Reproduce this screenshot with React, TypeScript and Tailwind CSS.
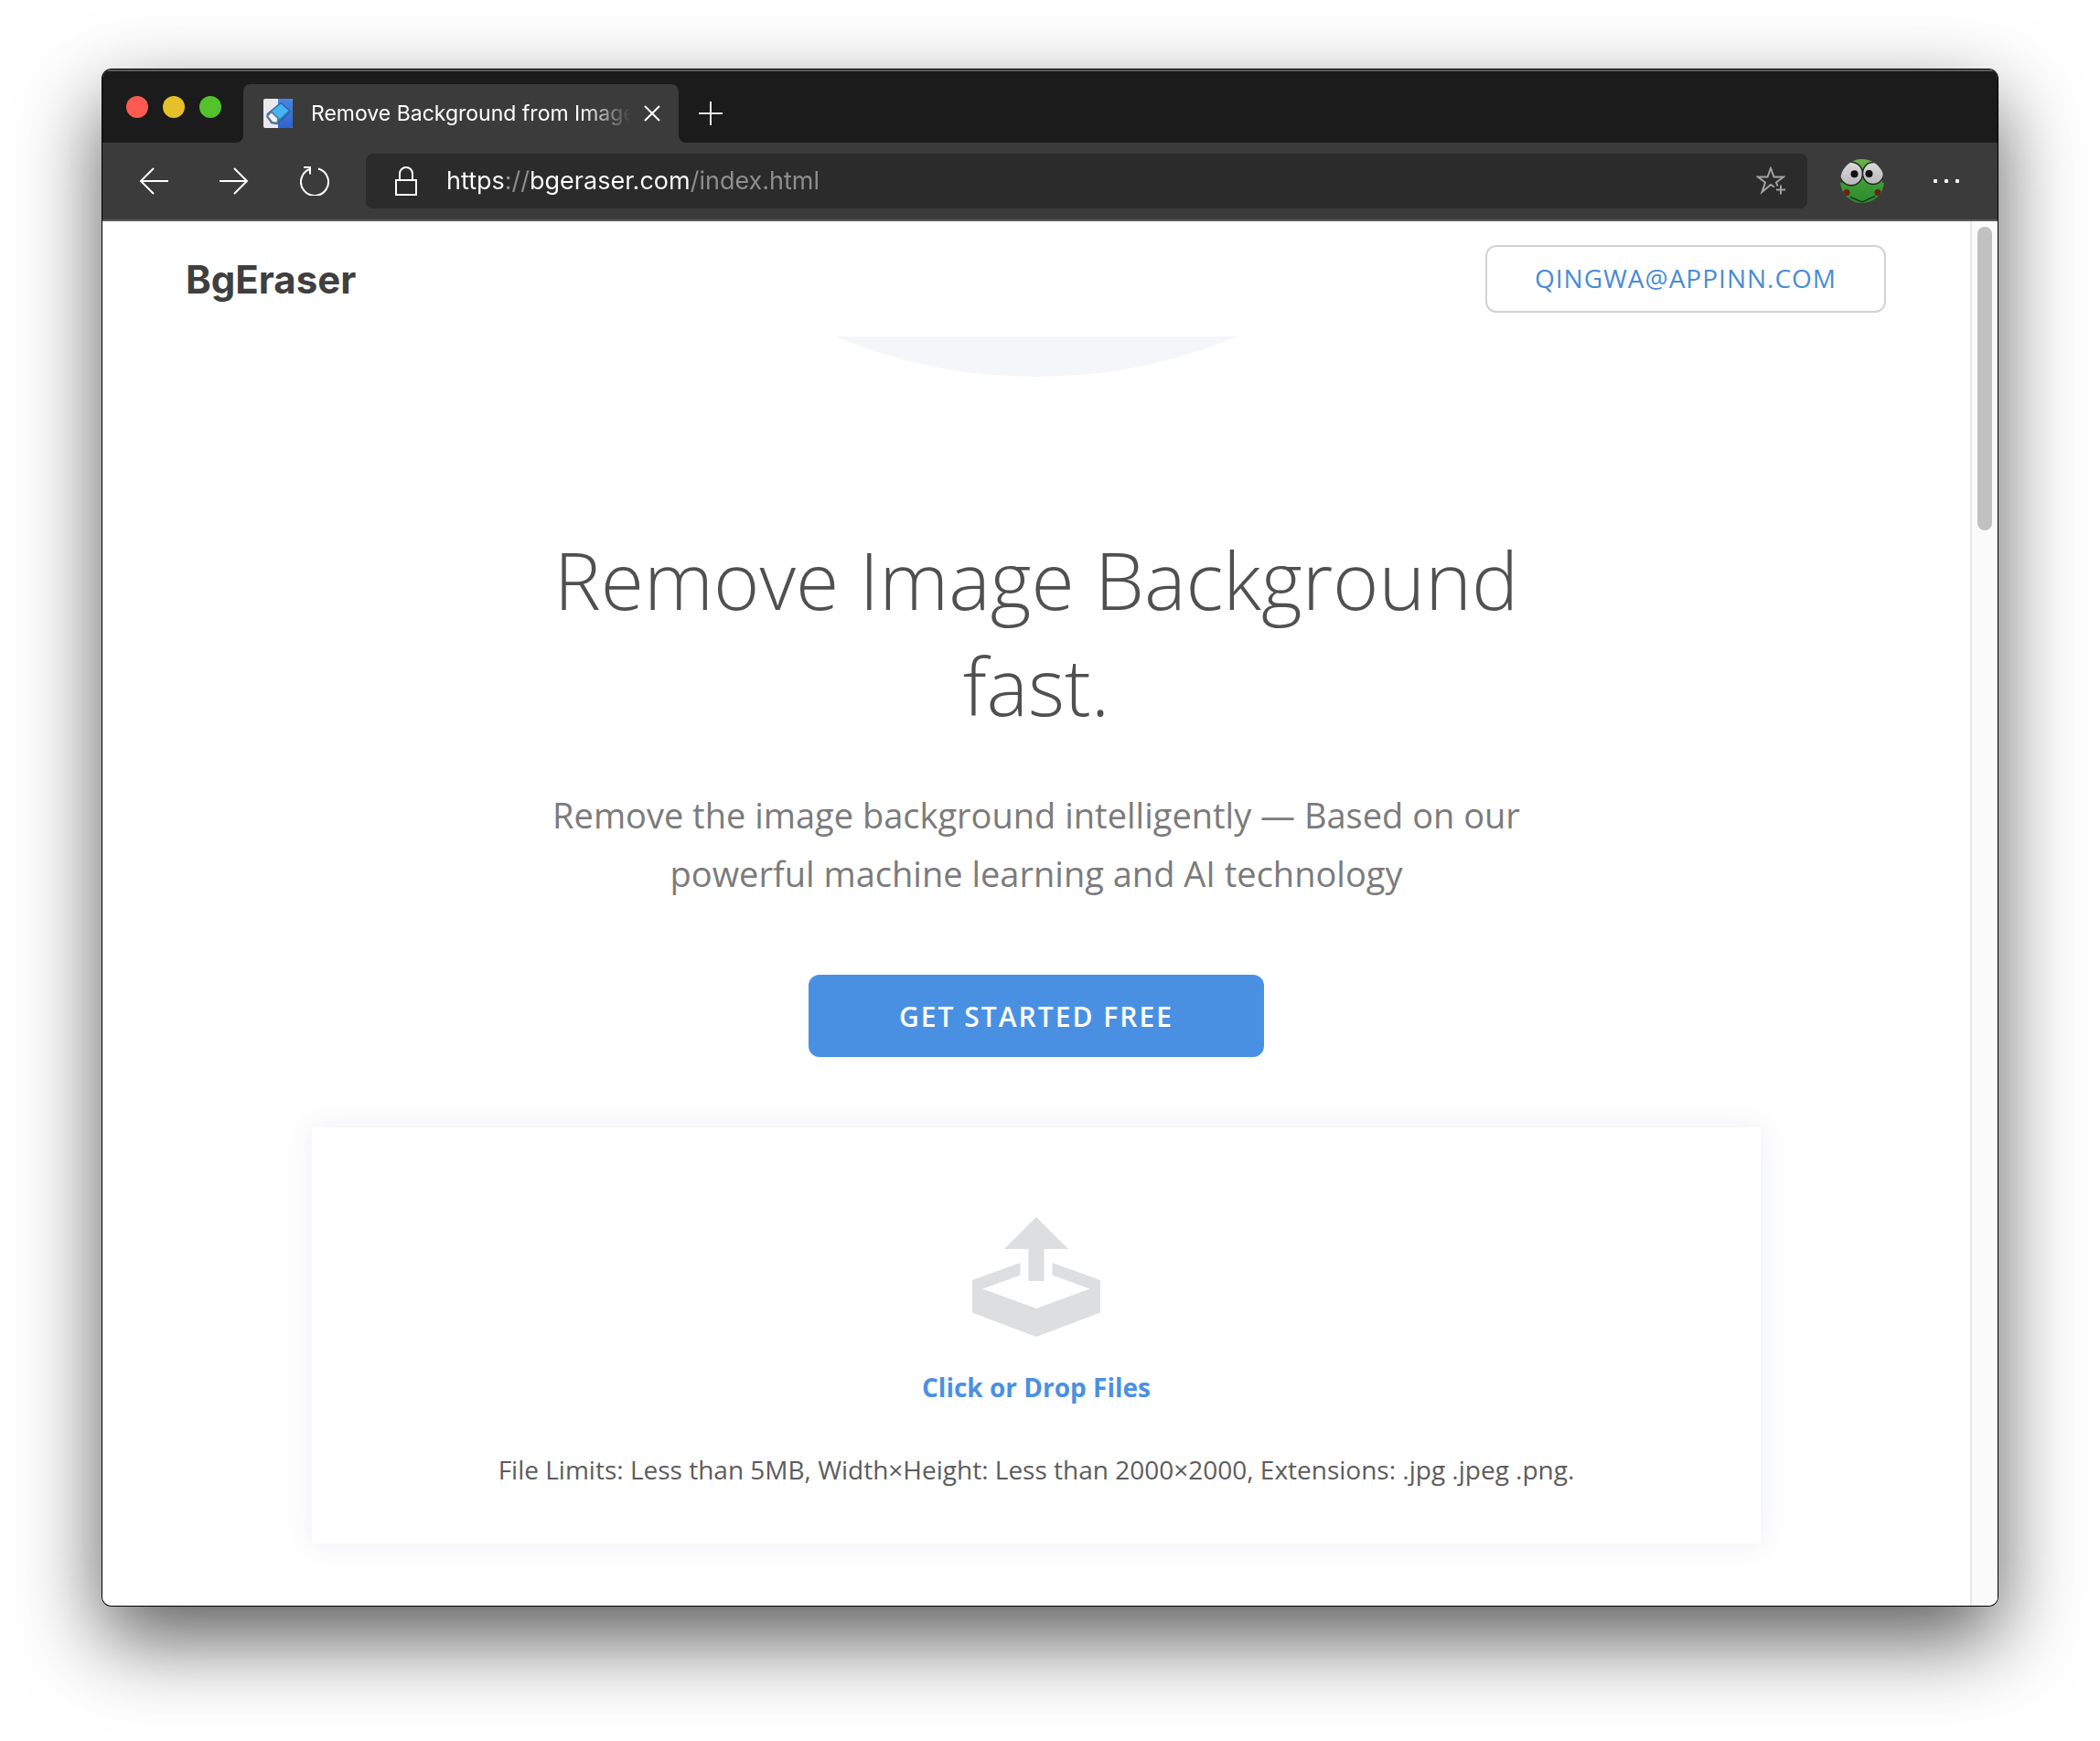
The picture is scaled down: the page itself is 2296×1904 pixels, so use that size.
import React, { useState } from 'react';

function BrowserTabs() {
  return (
    <div className="flex h-20 border-t-2 border-[#5c5c5c] bg-[#3b3b3b]">
      <div className="flex w-[154px] shrink-0 gap-4 rounded-br-lg bg-[#1b1b1b] pt-[27px] pl-[26px]">
        <button aria-label="Close window" className="size-6 rounded-full bg-[#ff5a52]" />
        <button aria-label="Minimize window" className="size-6 rounded-full bg-[#e6c029]" />
        <button aria-label="Zoom window" className="size-6 rounded-full bg-[#53c22b]" />
      </div>
      <div className="flex items-end bg-[#1b1b1b]">
        <div className="flex h-16 w-[476px] items-center rounded-t-lg bg-[#3b3b3b] pl-[22px]">
          <svg className="size-8 shrink-0" viewBox="0 0 32 32">
            <defs>
              <linearGradient id="favicon" x1="0" y1="0" x2="0" y2="1">
                <stop offset="0" stopColor="#4a86e0" />
                <stop offset="1" stopColor="#2f62cf" />
              </linearGradient>
            </defs>
            <rect width="32" height="32" rx="2" fill="#e9e9ee" />
            <path d="M16 0h14a2 2 0 0 1 2 2v28a2 2 0 0 1-2 2H16z" fill="url(#favicon)" />
            <g strokeLinejoin="round">
              <path d="M19 4.500 29 13.500 27.500 16.500 15 27.500 9 26.500 4 19.500 4.500 16.500z" fill="#2f70bd" stroke="#2c64a6" strokeWidth="1.500" />
              <path d="M19 5.500 27.500 13 18 22 9 13.500z" fill="#45b4f2" />
              <path d="M8.500 14.500 16 21.500 15 26.500 9.500 25.500 4.500 19z" fill="#f2f5f8" stroke="#6c7f92" strokeWidth="1.500" />
            </g>
          </svg>
          <span className="ml-5 w-[350px] overflow-hidden whitespace-nowrap text-[23px] text-white mask-r-from-85% mask-r-to-100%">
            Remove Background from Image
          </span>
          <button aria-label="Close tab" className="ml-3.5">
            <svg className="size-[18px]" viewBox="0 0 18 18" fill="none" stroke="#fff" strokeWidth="2">
              <path d="M1 1l16 16M17 1L1 17" />
            </svg>
          </button>
        </div>
      </div>
      <div className="flex flex-1 items-end rounded-bl-lg bg-[#1b1b1b]">
        <button aria-label="New tab" className="flex h-16 items-center px-[22px]">
          <svg className="size-[26px]" viewBox="0 0 26 26" fill="none" stroke="#e8e8e8" strokeWidth="2">
            <path d="M13 0v26M0 13h26" />
          </svg>
        </button>
      </div>
    </div>
  );
}

function FrogAvatar() {
  return (
    <svg className="size-12" viewBox="0 0 48 48">
      <defs>
        <clipPath id="avatar-clip">
          <circle cx="24" cy="24" r="24" />
        </clipPath>
        <linearGradient id="frog" x1="0" y1="0" x2="0" y2="1">
          <stop offset="0" stopColor="#6cb04e" />
          <stop offset="0.600" stopColor="#3a9a34" />
          <stop offset="1" stopColor="#2c8a2c" />
        </linearGradient>
        <linearGradient id="eye" x1="0" y1="0" x2="0" y2="1">
          <stop offset="0" stopColor="#dcdadc" />
          <stop offset="1" stopColor="#b9b6bb" />
        </linearGradient>
      </defs>
      <g clipPath="url(#avatar-clip)">
        <rect width="48" height="48" fill="url(#frog)" />
        <path d="M0 0h14L2 12v14h-2zM48 0H34l12 12v14h2z" fill="#3b3b3b" />
        <ellipse cx="12" cy="16" rx="12.500" ry="12.800" fill="url(#eye)" stroke="#1d2a1c" strokeWidth="1.500" />
        <ellipse cx="36" cy="15.500" rx="11.500" ry="12" fill="url(#eye)" stroke="#1d2a1c" strokeWidth="1.500" />
        <circle cx="15.500" cy="16.300" r="4" fill="#111" />
        <circle cx="31.500" cy="16" r="4" fill="#111" />
        <circle cx="7" cy="36.500" r="3.500" fill="#6e1f14" />
        <circle cx="41" cy="36.500" r="3.500" fill="#6e1f14" />
        <path d="M11 41.500 24 47l14-6.500" fill="none" stroke="#173a17" strokeWidth="1.500" />
      </g>
    </svg>
  );
}

function Toolbar() {
  const [url, setUrl] = useState('https://bgeraser.com/index.html');

  return (
    <div className="flex h-[86px] items-center border-b-2 border-[#5c5c5c] bg-[#3b3b3b] pr-[42px] pl-10">
      <nav className="flex items-center gap-14">
        <button aria-label="Back">
          <svg className="size-8" viewBox="0 0 32 32" fill="none" stroke="#fff" strokeWidth="2">
            <path d="M32 16H2M16 2 2 16l14 14" />
          </svg>
        </button>
        <button aria-label="Forward">
          <svg className="size-8" viewBox="0 0 32 32" fill="none" stroke="#fff" strokeWidth="2">
            <path d="M0 16h30M16 2l14 14-14 14" />
          </svg>
        </button>
        <button aria-label="Reload">
          <svg className="size-8" viewBox="0 0 32 32" fill="none" stroke="#fff" strokeWidth="2">
            <path d="M20 2.500a15 15 0 1 1-9.500.500M4 1h7v7.500" />
          </svg>
        </button>
      </nav>
      <div className="ml-10 flex h-[60px] flex-1 items-center rounded-lg bg-[#2b2b2b] pr-6 pl-8">
        <svg className="h-8 w-6 shrink-0" viewBox="0 0 24 32" fill="none" stroke="#fff" strokeWidth="2">
          <path d="M1 15h22v16H1zM5 15V8a7 7 0 0 1 14 0v7" />
        </svg>
        {/* scheme and domain are white, separators and path are dimmed */}
        <input
          type="text"
          aria-label="Address"
          value={url}
          onChange={(e) => setUrl(e.target.value)}
          className="ml-8 min-w-0 flex-1 bg-[linear-gradient(90deg,#fff_64px,#8f8f8f_64px,#8f8f8f_90px,#fff_90px,#fff_267px,#8f8f8f_267px)] bg-clip-text text-[27px] text-transparent caret-white outline-none"
        />
        <button aria-label="Add to favorites">
          <svg className="size-8" viewBox="0 0 32 32" fill="none" stroke="#a3a3a3" strokeWidth="2">
            <path d="M20 22.500 16 20 6.500 28 10 17.500 2 11.500h10.500L16 2l3.500 9.500H30l-8 6 1.500 4M27 20.500v10M22 25.500h10" />
          </svg>
        </button>
      </div>
      <button aria-label="Profile" className="ml-9">
        <FrogAvatar />
      </button>
      <button aria-label="Settings and more" className="ml-[54px] flex gap-2">
        <span className="size-1 rounded-[1px] bg-white" />
        <span className="size-1 rounded-[1px] bg-white" />
        <span className="size-1 rounded-[1px] bg-white" />
      </button>
    </div>
  );
}

function UploadIcon() {
  return (
    <svg className="h-[131px] w-[140px]" viewBox="0 0 140 131" fill="#dddee0">
      <path d="M70 0l35 35H78.500v35h-17V35H35z" />
      <path d="M0 69l52.500-19v13.500L11.500 78.500 70 100l58.500-21.500-41-15V50L140 69v35.500L70 131 0 104.500z" />
    </svg>
  );
}

export default function App() {
  return (
    <div className="flex min-h-screen flex-col bg-white px-28 pt-[76px] pb-[148px] font-['Inter',sans-serif]">
      <div className="flex flex-1 flex-col overflow-hidden rounded-[10px] shadow-[0_0_0_1px_#000,0_36px_90px_rgba(0,0,0,0.65)]">
        <BrowserTabs />
        <Toolbar />
        <div className="flex flex-1 bg-white font-['Open_Sans',sans-serif]">
          <div className="min-w-0 flex-1">
            <header className="flex h-[126px] items-center justify-between pr-[92px] pl-[91px]">
              <a href="#" className="font-['Inter',sans-serif] text-[42px] font-bold text-[#3f3f3f]">
                BgEraser
              </a>
              <a
                href="#"
                className="flex h-[74px] items-center rounded-xl border-2 border-[#d3d3d3] px-[52px] pb-0.5 text-[28px] tracking-[1px] text-[#4a8cd6]"
              >
                QINGWA@APPINN.COM
              </a>
            </header>

            <main className="relative flex flex-col items-center text-center">
              <svg className="absolute top-0 h-11 w-[440px]" viewBox="0 0 440 44" fill="#f5f6fa">
                <path d="M0 0A572 572 0 0 0 440 0z" />
              </svg>
              <h1 className="max-w-[1100px] pt-52 text-[86px] leading-[116px] font-light text-[#505050]">
                Remove Image Background fast.
              </h1>
              <p className="mt-[51px] max-w-[1100px] text-[38px] leading-16 text-[#7b7b7b]">
                Remove the image background intelligently — Based on our powerful machine learning and AI technology
              </p>
              <button className="mt-[79px] h-[90px] rounded-xl bg-[#4a90e2] px-[99px] text-[30px] font-semibold tracking-[2px] text-white">
                GET STARTED FREE
              </button>

              <div className="mt-[77px] w-full px-[229px]">
                <label className="flex cursor-pointer flex-col items-center bg-white pt-[98px] pb-[61px] text-[28px] leading-10 shadow-[0_0_30px_rgba(80,90,140,0.1)]">
                  <UploadIcon />
                  <span className="mt-[35px] font-bold text-[#4a90e2]">Click or Drop Files</span>
                  <span className="mt-[50px] text-[#5c5c5c]">
                    File Limits: Less than 5MB, Width×Height: Less than 2000×2000, Extensions: .jpg .jpeg .png.
                  </span>
                  <input type="file" accept=".jpg,.jpeg,.png" className="sr-only" />
                </label>
              </div>
            </main>
          </div>

          <div className="w-[30px] shrink-0 border-l-2 border-[#e8e8e8] bg-[#fafafa] px-1.5 pt-1.5">
            <div className="h-[332px] w-4 rounded-full bg-[#c1c1c1]" />
          </div>
        </div>
      </div>
    </div>
  );
}
